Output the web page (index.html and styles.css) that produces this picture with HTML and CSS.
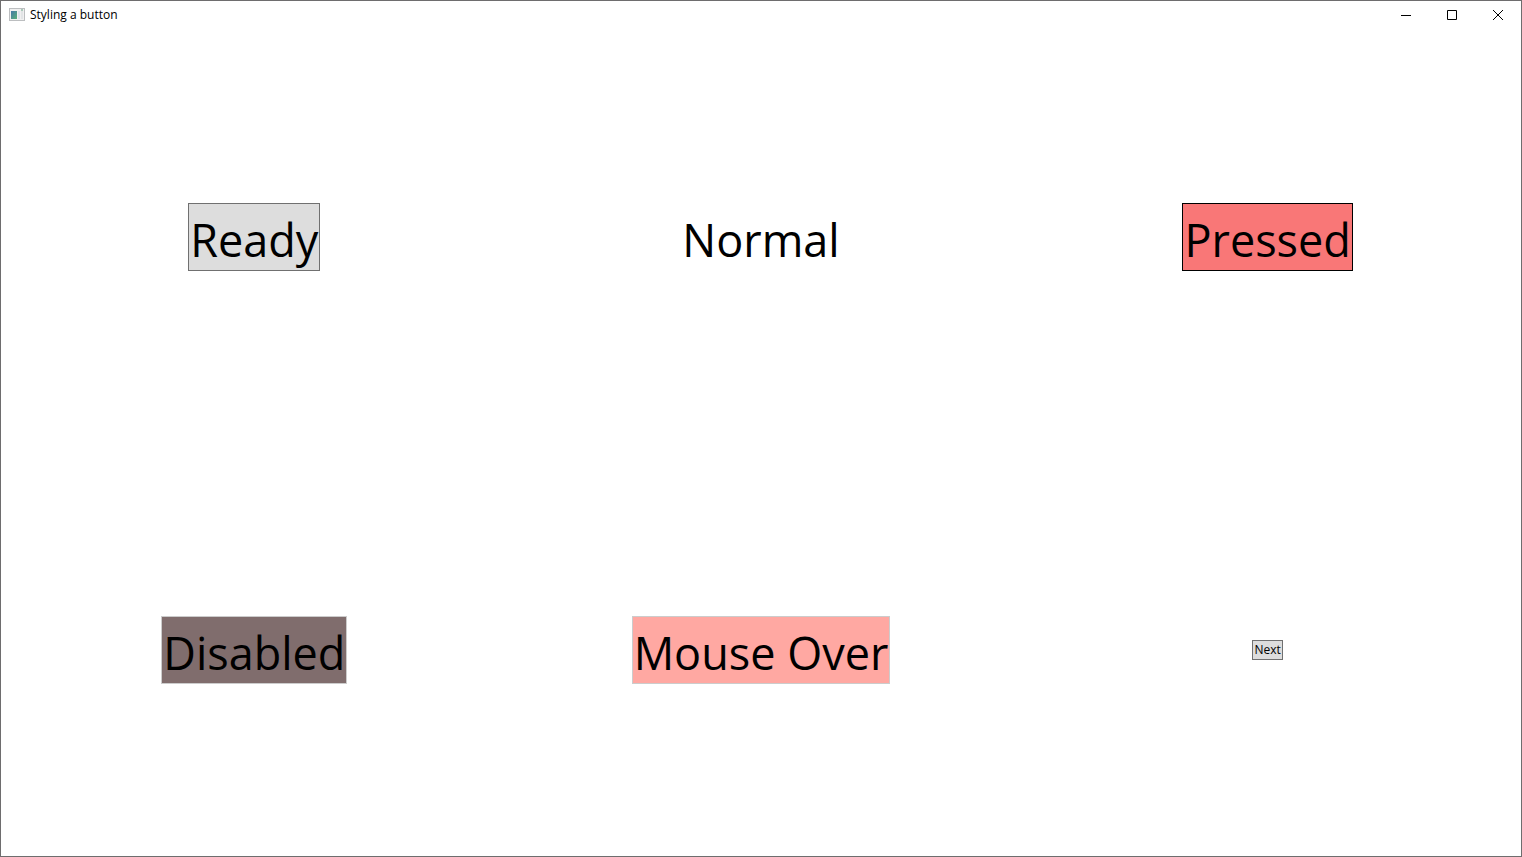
FILE: index.html
```html
<!DOCTYPE html>
<html lang="en">
<head>
<meta charset="utf-8">
<title>Styling a button</title>
<link rel="stylesheet" href="styles.css">
</head>
<body>
<div class="window">
  <header class="titlebar">
    <svg class="app-icon" width="16" height="14" viewBox="0 0 16 14" aria-hidden="true">
      <defs>
        <linearGradient id="pane" x1="0" y1="0" x2="1" y2="1">
          <stop offset="0" stop-color="#4478a8"/>
          <stop offset="1" stop-color="#58b078"/>
        </linearGradient>
      </defs>
      <rect x="0.5" y="0.5" width="15" height="12" fill="#f0f0f0" stroke="#bcbec0"/>
      <rect x="2" y="3" width="6" height="8" fill="url(#pane)"/>
      <rect x="9" y="3" width="2" height="8" fill="#dce2ea"/>
      <rect x="12" y="3" width="2" height="8" fill="#e2e4e6"/>
      <rect x="12" y="1" width="2" height="2" fill="#a9c8b8"/>
    </svg>
    <h1 class="title">Styling a button</h1>
    <div class="controls">
      <button class="control" type="button" aria-label="Minimize"><svg width="10" height="10" viewBox="0 0 10 10"><path d="M0 5.5h10"/></svg></button>
      <button class="control" type="button" aria-label="Maximize"><svg width="10" height="10" viewBox="0 0 10 10"><path d="M.5 .5h9v9h-9z"/></svg></button>
      <button class="control" type="button" aria-label="Close"><svg width="10" height="10" viewBox="0 0 10 10"><path d="M0 0l10 10M10 0L0 10"/></svg></button>
    </div>
  </header>
  <main class="grid">
    <button class="button ready" type="button">Ready</button>
    <button class="button normal" type="button">Normal</button>
    <button class="button pressed" type="button">Pressed</button>
    <button class="button disabled" type="button" disabled>Disabled</button>
    <button class="button hover" type="button">Mouse Over</button>
    <button class="button next" type="button">Next</button>
  </main>
</div>
</body>
</html>
```
FILE: styles.css
```css
* { box-sizing: border-box; }

body {
  margin: 0;
  background: #fff;
  color: #000;
  font-family: "Open Sans", "Noto Sans", sans-serif;
}

.window {
  display: flex;
  flex-direction: column;
  min-height: 100vh;
  border: 1px solid #6e6d6e;
}

.titlebar {
  display: flex;
  align-items: center;
  height: 29px;
  padding: 0 0 1px 8px;
}

.app-icon { margin-right: 5px; }

.title {
  flex: 1;
  margin: 0;
  font-size: 12px;
  font-weight: 400;
  line-height: 16px;
}

.controls { display: flex; }

.control {
  display: grid;
  place-items: center;
  width: 46px;
  height: 28px;
  padding: 0;
  border: 0;
  background: transparent;
}

.control path {
  fill: none;
  stroke: #000;
}

.grid {
  flex: 1;
  display: grid;
  grid-template-columns: repeat(3, 1fr);
  grid-template-rows: repeat(2, 1fr);
  place-items: center;
}

.button {
  padding: 6px 1px 0;
  border: 1px solid #707070;
  background: #ddd;
  color: #000;
  font-family: inherit;
  font-size: 45px;
  line-height: 60px;
  white-space: nowrap;
}

.normal {
  border-color: transparent;
  background: transparent;
}

.pressed {
  border-color: #000;
  background: #f97777;
}

.disabled {
  border-color: #ccc;
  background: #806d6d;
}

.hover {
  border-color: #ccc;
  background: #ffa8a2;
}

.next {
  padding: 1px;
  font-size: 12px;
  line-height: 16px;
}
```
